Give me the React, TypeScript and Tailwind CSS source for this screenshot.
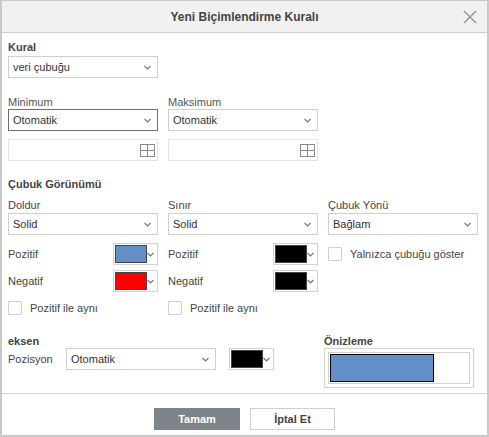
import React from "react";

const Chevron = () => (
  <svg width="7" height="5" viewBox="0 0 7 5" className="shrink-0">
    <path d="M0.5 1 L3.5 4 L6.5 1" fill="none" stroke="#777" strokeWidth="1.2" />
  </svg>
);

function Select({ value, w = "w-[150px]", focused = false }: { value: string; w?: string; focused?: boolean }) {
  return (
    <div
      className={`${w} h-[22px] flex items-center justify-between pl-[4px] pr-[6px] bg-white border ${
        focused ? "border-[#6f6f6f]" : "border-[#cfcfcf]"
      } text-[11px] text-[#333]`}
    >
      <span className="leading-[14px]">{value}</span>
      <Chevron />
    </div>
  );
}

function ColorBtn({ color }: { color: string }) {
  return (
    <div className="w-[45px] h-[22px] flex items-center bg-white border border-[#d3d3d3] pl-[1px] pr-[3px] justify-between">
      <div className="w-[32px] h-[18px] border border-[#444]" style={{ background: color }} />
      <Chevron />
    </div>
  );
}

function Checkbox({ label }: { label: string }) {
  return (
    <div className="flex items-center h-[14px]">
      <div className="w-[14px] h-[14px] border border-[#cfcfcf] rounded-[1px] bg-white shrink-0" />
      <span className="ml-[8px] text-[11px] text-[#444] leading-[14px] whitespace-nowrap">{label}</span>
    </div>
  );
}

const GridIcon = () => (
  <svg width="15" height="13" viewBox="0 0 15 13">
    <rect x="0.5" y="0.5" width="14" height="12" fill="none" stroke="#8a8a8a" />
    <line x1="7.5" y1="0.5" x2="7.5" y2="12.5" stroke="#8a8a8a" />
    <line x1="0.5" y1="6.5" x2="14.5" y2="6.5" stroke="#8a8a8a" />
  </svg>
);

function RangeInput() {
  return (
    <div className="w-[150px] h-[22px] border border-[#e2e2e2] bg-white flex items-center justify-end pr-[2px]">
      <GridIcon />
    </div>
  );
}

export default function App() {
  return (
    <div
      className="w-[489px] h-[437px] bg-white border-t border-x-2 border-b-2 border-[#c9c9c9] flex flex-col text-[#444]"
      style={{ fontFamily: '"Liberation Sans", Arial, sans-serif' }}
    >
      {/* Title bar */}
      <div className="h-[32px] shrink-0 bg-[#f1f1f1] border-b border-[#cbcbcb] relative flex items-center justify-center">
        <span className="text-[12px] font-bold text-[#444] leading-[16px]">Yeni Biçimlendirme Kuralı</span>
        <svg className="absolute right-[10px] top-[9px]" width="14" height="14" viewBox="0 0 14 14">
          <path d="M1 1 L13 13 M13 1 L1 13" stroke="#8c8c8c" strokeWidth="1.2" />
        </svg>
      </div>

      {/* Body */}
      <div className="h-[360px] shrink-0 pl-[6px] pr-[9px] flex flex-col">
        <div className="mt-[7px] text-[11px] font-bold leading-[14px]">Kural</div>
        <div className="mt-[2px]">
          <Select value="veri çubuğu" />
        </div>

        <div className="mt-[17px] flex gap-[10px]">
          <div className="flex flex-col">
            <div className="text-[11px] leading-[14px] text-[#555]">Minimum</div>
            <Select value="Otomatik" focused />
            <div className="mt-[8px]">
              <RangeInput />
            </div>
          </div>
          <div className="flex flex-col">
            <div className="text-[11px] leading-[14px] text-[#555]">Maksimum</div>
            <Select value="Otomatik" />
            <div className="mt-[8px]">
              <RangeInput />
            </div>
          </div>
        </div>

        <div className="mt-[16px] text-[11px] font-bold leading-[14px]">Çubuk Görünümü</div>

        <div className="mt-[7px] flex gap-[10px]">
          <div className="w-[150px] flex flex-col">
            <div className="text-[11px] leading-[14px]">Doldur</div>
            <div className="mt-[1px]">
              <Select value="Solid" />
            </div>
            <div className="mt-[8px] flex items-center justify-between">
              <span className="text-[11px] leading-[14px]">Pozitif</span>
              <ColorBtn color="#638fc6" />
            </div>
            <div className="mt-[5px] flex items-center justify-between">
              <span className="text-[11px] leading-[14px]">Negatif</span>
              <ColorBtn color="#ff0000" />
            </div>
            <div className="mt-[9px]">
              <Checkbox label="Pozitif ile aynı" />
            </div>
          </div>
          <div className="w-[150px] flex flex-col">
            <div className="text-[11px] leading-[14px]">Sınır</div>
            <div className="mt-[1px]">
              <Select value="Solid" />
            </div>
            <div className="mt-[8px] flex items-center justify-between">
              <span className="text-[11px] leading-[14px]">Pozitif</span>
              <ColorBtn color="#000000" />
            </div>
            <div className="mt-[5px] flex items-center justify-between">
              <span className="text-[11px] leading-[14px]">Negatif</span>
              <ColorBtn color="#000000" />
            </div>
            <div className="mt-[9px]">
              <Checkbox label="Pozitif ile aynı" />
            </div>
          </div>
          <div className="w-[150px] flex flex-col">
            <div className="text-[11px] leading-[14px]">Çubuk Yönü</div>
            <div className="mt-[1px]">
              <Select value="Bağlam" />
            </div>
            <div className="mt-[8px] h-[22px] flex items-center">
              <Checkbox label="Yalnızca çubuğu göster" />
            </div>
          </div>
        </div>

        <div className="mt-[19px] flex">
          <div className="flex flex-col">
            <div className="text-[11px] font-bold leading-[14px]">eksen</div>
            <div className="flex items-center">
              <span className="w-[58px] text-[11px] leading-[14px]">Pozisyon</span>
              <Select value="Otomatik" />
              <div className="ml-[13px]">
                <ColorBtn color="#000000" />
              </div>
            </div>
          </div>
          <div className="ml-[50px] flex flex-col">
            <div className="text-[11px] font-bold leading-[14px]">Önizleme</div>
            <div className="w-[150px] h-[40px] border border-[#d3d3d3] p-[3px]">
              <div className="h-full border border-[#d3d3d3] p-[1px]">
                <div className="w-[104px] h-[28px] bg-[#638fc6] border border-black" />
              </div>
            </div>
          </div>
        </div>
      </div>

      {/* Footer */}
      <div className="flex-1 border-t border-[#d3d3d3] flex justify-center items-start pt-[14px] gap-[10px]">
        <div className="w-[86px] h-[22px] bg-[#7d848a] text-white text-[11px] font-bold flex items-center justify-center">
          Tamam
        </div>
        <div className="w-[85px] h-[22px] bg-white border border-[#cfcfcf] text-[#444] text-[11px] font-bold flex items-center justify-center">
          İptal Et
        </div>
      </div>
    </div>
  );
}
